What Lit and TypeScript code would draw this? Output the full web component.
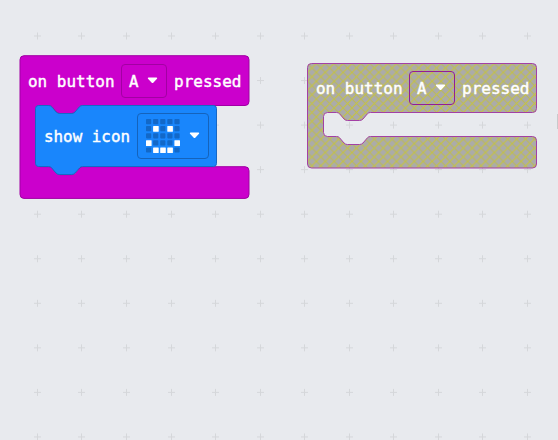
import { LitElement, html, css, svg } from "lit";
import { customElement, property } from "lit/decorators.js";

const crosses = [0, 1, 2, 3, 4, 5, 6, 7, 8, 9].flatMap((row) =>
  [0, 1, 2, 3, 4, 5, 6, 7, 8, 9, 10, 11].map((col) => ({
    x: Math.floor(37.4 + col * 44.55) + 0.5,
    y: 36 + row * 44.55,
  }))
);

const FACE = [".....", ".#.#.", ".....", "#...#", ".###."];

const armPath = (w: number, head: number, slot: number, h: number) =>
  `M4 0H${w - 4}Q${w} 0 ${w} 4V${head - 4}Q${w} ${head} ${w - 4} ${head}
   H63Q61 ${head} 60 ${head + 1.2}L55.5 ${head + 6.5}Q54 ${head + 8} 52 ${head + 8}
   H40Q38 ${head + 8} 36.5 ${head + 6.5}L32 ${head + 1.2}Q31 ${head} 29 ${head}H20
   Q16 ${head} 16 ${head + 4}V${slot - 4}Q16 ${slot} 20 ${slot}
   H29Q31 ${slot} 32 ${slot + 1.2}L36.5 ${slot + 6.5}Q38 ${slot + 8} 40 ${slot + 8}H52
   Q54 ${slot + 8} 55.5 ${slot + 6.5}L60 ${slot + 1.2}Q61 ${slot} 63 ${slot}
   H${w - 4}Q${w} ${slot} ${w} ${slot + 4}V${h - 4}Q${w} ${h} ${w - 4} ${h}
   H4Q0 ${h} 0 ${h - 4}V4Q0 0 4 0Z`;

@customElement("block-text")
export class BlockText extends LitElement {
  @property() text = "";
  @property({ type: Number }) width = 0;
  static styles = css`
    :host { display: block; flex: none; height: 26px; }
    svg { display: block; overflow: visible; }
    text {
      font: 400 16.5px "DejaVu Sans Mono", monospace;
      fill: #fff;
      stroke: #fff;
      stroke-width: 0.45px;
    }
  `;
  render() {
    return html`<svg width=${this.width} height="26">
      <text x="0" y="18.7" textLength=${this.width} lengthAdjust="spacingAndGlyphs">${this.text}</text>
    </svg>`;
  }
}

@customElement("app-root")
export class AppRoot extends LitElement {
  static styles = css`
    :host {
      display: block;
      position: relative;
      width: 558px;
      height: 440px;
      overflow: hidden;
      background: #e8eaee;
    }
    svg { display: block; overflow: visible; }
    .grid { position: absolute; inset: 0; }
    .grid path { stroke: #d5d7da; stroke-width: 1; fill: none; }
    .block { position: absolute; }
    .shape { position: absolute; left: 0; top: 0; }
    .event { left: 19px; top: 55px; width: 231px; height: 144px; }
    .disabled { left: 307px; top: 63px; width: 230px; height: 106px; }
    .icon-block { left: 35px; top: 105px; width: 182px; height: 70px; }
    .row {
      position: relative;
      display: flex;
      align-items: center;
      box-sizing: border-box;
      height: 51px;
      padding-left: 8.5px;
    }
    .disabled .row { height: 50px; }
    .icon-block .row { height: 62px; }
    .picker {
      display: flex;
      align-items: center;
      box-sizing: border-box;
      flex: none;
      width: 46px;
      height: 34px;
      margin: 0 7px;
      padding-left: 7px;
      gap: 8.5px;
      border: 1px solid #a300a3;
      border-radius: 4px;
    }
    .disabled .picker { border-color: #941c94; }
    .icon-picker {
      display: flex;
      align-items: center;
      box-sizing: border-box;
      flex: none;
      width: 72px;
      height: 46px;
      margin-left: 7.5px;
      padding-left: 8px;
      gap: 9px;
      border: 1px solid #1563bb;
      border-radius: 4px;
    }
    .arrow { flex: none; margin-top: -1px; }
    .scroll {
      position: absolute;
      left: 557px;
      top: 114px;
      width: 1px;
      height: 15px;
      background: #c9cacc;
    }
  `;

  private arrow() {
    return html`<svg class="arrow" width="11" height="7">
      <path d="M1.5 .5H9.5Q10.8 .7 10 1.8L6.5 5.6Q5.5 6.6 4.5 5.6L1 1.8Q.2 .7 1.5 .5Z" fill="#fff" />
    </svg>`;
  }

  private buttonRow() {
    return html`<div class="row">
      <block-text text="on button" .width=${86.5}></block-text>
      <div class="picker">
        <block-text text="A" .width=${9.5}></block-text>
        ${this.arrow()}
      </div>
      <block-text text="pressed" .width=${67.5}></block-text>
    </div>`;
  }

  private face() {
    return html`<svg width="34" height="34">
      ${FACE.flatMap((line, r) =>
        [...line].map((c, i) =>
          c === "#"
            ? svg`<rect x=${i * 7.1} y=${r * 7.1} width="5.6" height="5.6" rx=".5" fill="#fff" />`
            : svg`<rect x=${i * 7.1} y=${r * 7.1} width="5.2" height="5.2" rx=".8" fill="#1268c8" />`
        )
      )}
    </svg>`;
  }

  render() {
    return html`
      <svg class="grid" width="558" height="440">
        ${crosses.map((p) => svg`<path d=${`M${p.x - 3.5} ${p.y}h7M${p.x} ${p.y - 3.5}v7`} />`)}
      </svg>
      <div class="block event">
        <svg class="shape" width="231" height="144">
          <path transform="translate(1 .7)" d=${armPath(229, 49.8, 111, 142.7)} fill="#cb00cc" stroke="#a000a3" />
        </svg>
        ${this.buttonRow()}
      </div>
      <div class="block icon-block">
        <svg class="shape" width="182" height="70">
          <path
            transform="translate(.5 .5)"
            d="M3 0H13Q15 0 16 1.2L20.5 6.5Q22 8 24 8H36Q38 8 39.5 6.5L44 1.2Q45 0 47 0H178Q181 0 181 3V58Q181 61 178 61H47Q45 61 44 62.2L39.5 67.5Q38 69 36 69H24Q22 69 20.5 67.5L16 62.2Q15 61 13 61H3Q0 61 0 58V3Q0 0 3 0Z"
            fill="#1986fc"
            stroke="#1668c6"
          />
        </svg>
        <div class="row">
          <block-text text="show icon" .width=${86}></block-text>
          <div class="icon-picker">${this.face()}${this.arrow()}</div>
        </div>
      </div>
      <div class="block disabled">
        <svg class="shape" width="230" height="106">
          <defs>
            <pattern id="hatch" width="8.9" height="8.9" patternUnits="userSpaceOnUse">
              <rect width="8.9" height="8.9" fill="#ababaa" />
              <path d="M-1 -1L9.9 9.9" stroke="#bcba55" stroke-width="1" />
              <path d="M9.9 -1L-1 9.9" stroke="#c8c53a" stroke-width="1.1" />
            </pattern>
          </defs>
          <path transform="translate(.5 .5)" d=${armPath(229, 49, 73, 104.5)} fill="url(#hatch)" stroke="#a340a5" />
        </svg>
        ${this.buttonRow()}
      </div>
      <div class="scroll"></div>
    `;
  }
}
